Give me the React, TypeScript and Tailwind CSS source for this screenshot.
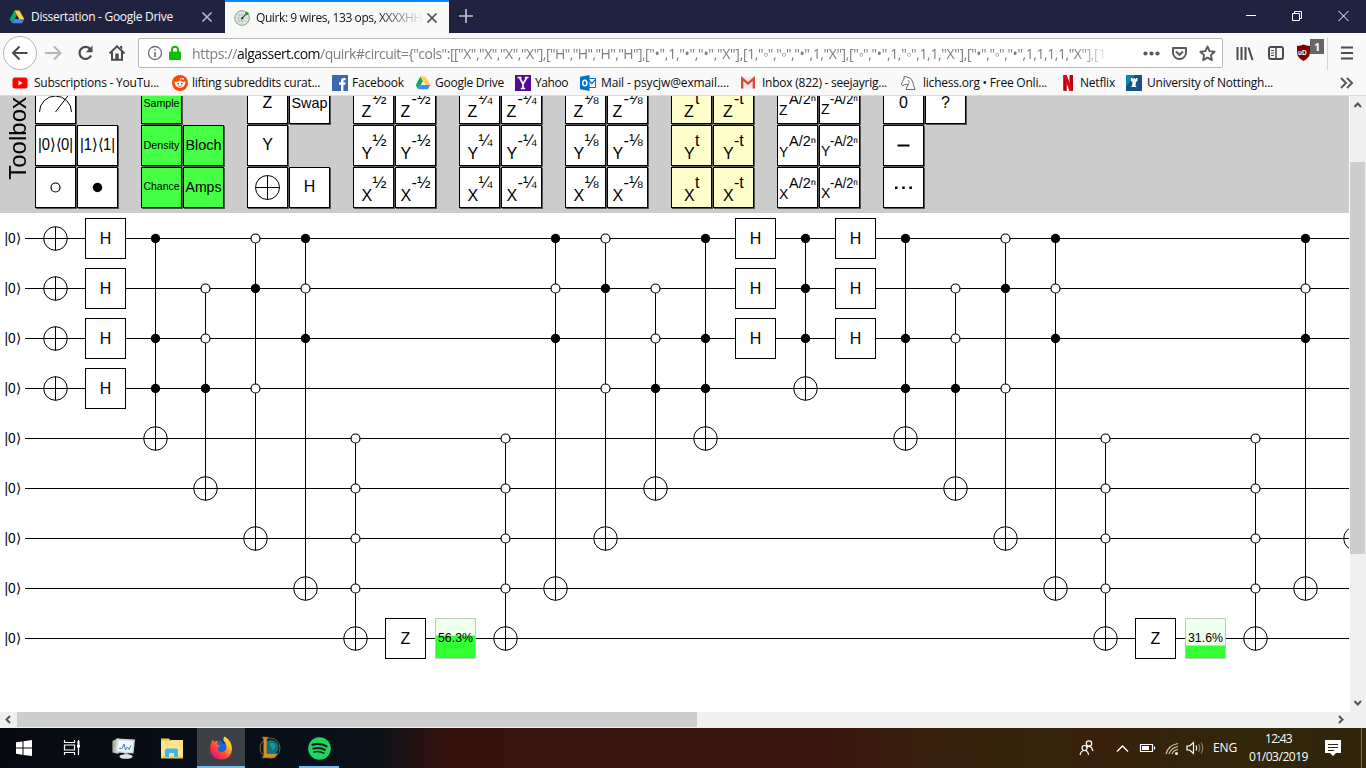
import { useLayoutEffect, useRef, type ReactNode } from "react";

const UI = "font-['Open_Sans','Noto_Sans',sans-serif]";

/** Text whose letter spacing is tuned so that it fills the width of its box. */
function Fit({ children, className }: { children: string; className: string }) {
  const box = useRef<HTMLSpanElement>(null);
  const inner = useRef<HTMLSpanElement>(null);
  useLayoutEffect(() => {
    const b = box.current;
    const i = inner.current;
    if (!b || !i) return;
    i.style.letterSpacing = "0px";
    const diff = b.getBoundingClientRect().width - i.getBoundingClientRect().width;
    i.style.letterSpacing = `${diff / children.length}px`;
  }, [children]);
  return (
    <span ref={box} className={`block shrink-0 whitespace-pre ${className}`}>
      <span ref={inner} className="inline-block">{children}</span>
    </span>
  );
}

/* ---------- small icons ---------- */

function DriveIcon() {
  return (
    <svg width="16" height="16" viewBox="0 0 16 16" className="shrink-0">
      <path d="M5.4 1.5 L0.7 10.2 L3.2 14.2 L8 6z" fill="#0da960" />
      <path d="M5.4 1.5 H10.4 L15.3 10 H10.3z" fill="#ffcf48" />
      <path d="M5.7 10 H15.3 L12.9 14.2 H3.2z" fill="#4587f4" />
    </svg>
  );
}

function Cross({ color }: { color: string }) {
  return (
    <svg width="12" height="12" viewBox="0 0 12 12" className="shrink-0">
      <path d="M1.5 1.5 L10.5 10.5 M10.5 1.5 L1.5 10.5" stroke={color} strokeWidth="1.7" fill="none" />
    </svg>
  );
}

function QuirkIcon() {
  return (
    <svg width="16" height="16" viewBox="0 0 16 16" className="shrink-0">
      <circle cx="8" cy="8" r="7.3" fill="#e3ece3" stroke="#8d978d" />
      <path d="M3 5 H13 M2 8 H14 M3 11 H13 M5 3 V13 M8 2 V14" stroke="#a9bfa9" strokeWidth=".7" />
      <path d="M7.500 9 L12.500 3.500" stroke="#222" strokeWidth="1.1" />
      <path d="M7 9.500 L9.500 8.700 L7.800 7z" fill="#222" />
      <circle cx="12.8" cy="3.5" r="1.8" fill="#2d9b2d" />
    </svg>
  );
}

/* ---------- browser chrome ---------- */

function TabStrip() {
  return (
    <div className="flex h-[33px] shrink-0 bg-[#202340] text-[12px]">
      <div className="flex w-[225px] items-center pt-[1px] pl-[9px] text-[#f9f9fa]">
        <DriveIcon />
        <Fit className="ml-[6px] w-[142px]">Dissertation - Google Drive</Fit>
        <span className="ml-[28px]"><Cross color="#b4b5c0" /></span>
      </div>
      <div className="flex w-[224px] items-center border-t-2 border-[#0a84ff] bg-[#f9f9fa] pl-[9px] text-[#111]">
        <QuirkIcon />
        <span className="ml-[6px] block w-[166px] overflow-hidden [mask-image:linear-gradient(to_right,black_122px,transparent_168px)]">
          <Fit className="w-[166px]">Quirk: 9 wires, 133 ops, XXXXHH</Fit>
        </span>
        <span className="ml-[4px]"><Cross color="#4a4a4f" /></span>
      </div>
      <svg width="34" height="33" className="shrink-0">
        <path d="M10 16 H24 M17 9 V23" stroke="#bfc0cc" strokeWidth="1.7" />
      </svg>
      <div className="flex flex-1 justify-end">
        <svg width="138" height="33" className="shrink-0" fill="none" stroke="#fff">
          <path d="M18 15.500 H28" />
          <path d="M64.500 13.500 h7 v7 h-7 z M66.500 13.500 v-2 h7 v7 h-2" />
          <path d="M110.500 11 l10 10 M120.500 11 l-10 10" />
        </svg>
      </div>
    </div>
  );
}

const URL_PARTS: [string, string][] = [
  ["w-[45px]", "https://"],
  ["w-[83px] text-[#0c0c0d]", "algassert.com"],
  ["w-[134px]", '/quirk#circuit={"cols":['],
  ["w-[92px]", '["X","X","X","X"],'],
  ["w-[99px]", '["H","H","H","H"],'],
  ["w-[98px]", '["•",1,"•","•","X"],'],
  ["w-[106px]", '[1,"◦","◦","•",1,"X"],'],
  ["w-[118px]", '["◦","•",1,"◦",1,1,"X"],'],
  ["w-[127px]", '["•","◦","•",1,1,1,1,"X"],'],
  ["w-[12px]", "[1"],
];

function NavBar() {
  return (
    <div className="flex h-[39px] shrink-0 items-center bg-[#f9f9fa]">
      <svg width="138" height="39" className="shrink-0" fill="none">
        <circle cx="20" cy="20" r="16.500" fill="#fff" stroke="#b6b6b8" />
        <path d="M27.500 20 H13 M19.500 13.500 L13 20 L19.500 26.500" stroke="#4a4a4f" strokeWidth="2" />
        <path d="M45 20 H60 M54 13.500 L60.500 20 L54 26.500" stroke="#b5b5b8" strokeWidth="2" />
        <path d="M90.300 16.200 A6 6 0 1 0 91 22.500" stroke="#4a4a4f" strokeWidth="2.200" />
        <path d="M92.500 12.500 V19.300 H85.800 z" fill="#4a4a4f" />
        <path d="M109.500 20.500 L117 13.300 L124.500 20.500 M112 19 V26.800 H122 V19" stroke="#4a4a4f" strokeWidth="2" />
        <rect x="115.300" y="20.500" width="3.400" height="6" fill="#4a4a4f" />
        <path d="M120 13 h2.200 v3.500 l-2.200 -2z" fill="#4a4a4f" />
      </svg>
      <div className="mt-px flex h-[30px] w-[1085px] shrink-0 items-center rounded-[2px] border border-[#b9b9bb] bg-white">
        <svg width="53" height="28" className="shrink-0" fill="none">
          <circle cx="16" cy="14" r="6.500" stroke="#6f6f73" strokeWidth="1.300" />
          <path d="M16 13 V18 M16 10 V11.600" stroke="#6f6f73" strokeWidth="1.600" />
          <path d="M33 13 V10.800 a3 3 0 0 1 6 0 V13" stroke="#12bc00" strokeWidth="2" />
          <rect x="30" y="12.500" width="12" height="8.500" rx="1" fill="#12bc00" />
        </svg>
        <div className="flex h-[28px] w-[914px] pt-[1px] text-[14px] leading-[27px] text-[#7d7d80] [mask-image:linear-gradient(to_right,black_885px,transparent_918px)]">
          {URL_PARTS.map(([cls, t]) => (
            <Fit key={t} className={cls}>{t}</Fit>
          ))}
        </div>
        <svg width="116" height="28" className="shrink-0" fill="none">
          <g fill="#5a5a5e">
            <circle cx="39.500" cy="14.500" r="2.100" /><circle cx="45.500" cy="14.500" r="2.100" /><circle cx="51.500" cy="14.500" r="2.100" />
          </g>
          <path d="M67 9 h13 v4.500 a6.500 6.500 0 0 1 -13 0z" stroke="#5a5a5e" strokeWidth="2" strokeLinejoin="round" />
          <path d="M70 12.500 L73.500 15.800 L77 12.500" stroke="#5a5a5e" strokeWidth="2" />
          <path d="M101.500 7.500 l2.100 4.600 5 .6 -3.700 3.400 1 5 -4.400 -2.500 -4.400 2.500 1 -5 -3.700 -3.400 5 -.6z" stroke="#5a5a5e" strokeWidth="1.900" strokeLinejoin="round" />
        </svg>
      </div>
      <svg width="143" height="39" className="shrink-0" fill="none" stroke="#4a4a4f">
        <path d="M14.500 14 V27 M18.500 14 V27 M22.500 14 V27 M25.500 14.500 L29.500 27" strokeWidth="2" />
        <rect x="46" y="14" width="14" height="12" rx="2" strokeWidth="2" />
        <path d="M53 14 V26" strokeWidth="1.500" />
        <path d="M48 17.500 H51 M48 20 H51 M48 22.500 H51" strokeWidth="1" />
        <path d="M74 13 Q78 12.500 80.500 11.500 Q83 12.500 87 13 V19 Q87 25 80.500 28 Q74 25 74 19z" fill="#800000" stroke="none" />
        <text x="75" y="22" fontSize="6.500" fontWeight="bold" fill="#fff" stroke="none" fontFamily="Liberation Sans, sans-serif">uD</text>
        <rect x="87" y="6" width="14" height="15" fill="#666669" stroke="none" />
        <text x="91" y="17.500" fontSize="11" fontWeight="bold" fill="#fff" stroke="none" fontFamily="Open Sans, sans-serif">1</text>
        <path d="M104.500 4 V37" stroke="#d7d7db" />
        <path d="M118 14.500 H130 M118 20 H130 M118 25.500 H130" strokeWidth="2" />
      </svg>
    </div>
  );
}

function Icon16({ children }: { children: ReactNode }) {
  return <svg width="16" height="16" viewBox="0 0 16 16" className="shrink-0">{children}</svg>;
}

const BOOKMARKS: { slot: string; text: string; label: string; icon: ReactNode }[] = [
  {
    slot: "w-[160px]", text: "ml-[6px] w-[125px]", label: "Subscriptions - YouTu...",
    icon: <Icon16><rect x=".5" y="2.500" width="15" height="11" rx="2.500" fill="#f00" /><path d="M6.500 5.500 L10.700 8 L6.500 10.500z" fill="#fff" /></Icon16>,
  },
  {
    slot: "w-[160px]", text: "ml-[4px] w-[128px]", label: "lifting subreddits curat...",
    icon: (
      <Icon16>
        <circle cx="8" cy="8" r="8" fill="#ff4500" />
        <ellipse cx="8" cy="9.300" rx="4.800" ry="3.400" fill="#fff" />
        <circle cx="3.600" cy="7.800" r="1.200" fill="#fff" /><circle cx="12.400" cy="7.800" r="1.200" fill="#fff" />
        <path d="M8 6 L8.700 3.300 L11 3.800" stroke="#fff" strokeWidth=".8" fill="none" /><circle cx="11.200" cy="3.900" r=".9" fill="#fff" />
        <circle cx="6.200" cy="8.700" r=".9" fill="#ff4500" /><circle cx="9.800" cy="8.700" r=".9" fill="#ff4500" />
        <path d="M6 10.800 Q8 12 10 10.800" stroke="#ff4500" strokeWidth=".7" fill="none" />
      </Icon16>
    ),
  },
  {
    slot: "w-[83px]", text: "ml-[4px] w-[52px]", label: "Facebook",
    icon: <Icon16><path d="M0 0 H16 V16 H0z" fill="#4267b2" /><path d="M9 16 V9.800 H7 V7.300 H9 V5.600 Q9 3 11.700 3 H13.600 V5.300 H12.300 Q11.400 5.300 11.400 6.200 V7.300 H13.600 L13.200 9.800 H11.400 V16z" fill="#fff" /></Icon16>,
  },
  { slot: "w-[100px]", text: "ml-[4px] w-[69px]", label: "Google Drive", icon: <DriveIcon /> },
  {
    slot: "w-[65px]", text: "ml-[4px] w-[33px]", label: "Yahoo",
    icon: <Icon16><path d="M0 0 H16 V16 H0z" fill="#500a9a" /><path d="M2.500 2.500 H6.500 M9.800 2.500 H13.500 M4.500 2.500 L8 9 L11.800 2.500 M8 9 V13.500 M5.800 13.500 H10.200" stroke="#fff" strokeWidth="1.700" fill="none" /></Icon16>,
  },
  {
    slot: "w-[160px]", text: "ml-[5px] w-[128px]", label: "Mail - psycjw@exmail....",
    icon: (
      <Icon16>
        <path d="M8 3.500 H15.500 V12.500 H8z" fill="#fff" stroke="#0072c6" />
        <path d="M9 5.500 L11.800 8.500 L15 5" stroke="#0072c6" strokeWidth="1.200" fill="none" />
        <path d="M0 1.800 L9.500 0 V16 L0 14.200z" fill="#0072c6" />
        <ellipse cx="4.800" cy="8" rx="2.100" ry="2.800" stroke="#fff" strokeWidth="1.500" fill="none" />
      </Icon16>
    ),
  },
  {
    slot: "w-[160px]", text: "ml-[6px] w-[125px]", label: "Inbox (822) - seejayrig...",
    icon: <Icon16><rect x="1.500" y="2.500" width="13" height="11" fill="#e8e8e8" /><path d="M2.200 13.500 V3.500 L8 8.500 L13.800 3.500 V13.500" stroke="#db4437" strokeWidth="2.300" fill="none" /></Icon16>,
  },
  {
    slot: "w-[160px]", text: "ml-[7px] w-[124px]", label: "lichess.org • Free Onli...",
    icon: (
      <Icon16>
        <path d="M4 1.500 L7 2 Q11.500 2.500 12.800 7 Q13.300 10 15 14.500 H6 Q6.500 12 8.500 9.500 Q6.500 9.500 4.700 9.500 L3 10.800 L1.300 9 Q2.800 6 4 4z" fill="#fff" stroke="#666" strokeWidth="1" />
        <path d="M8 5 Q10 7 8.500 9.500" fill="none" stroke="#777" strokeWidth=".8" />
      </Icon16>
    ),
  },
  {
    slot: "w-[66px]", text: "ml-[4px] w-[35px]", label: "Netflix",
    icon: <Icon16><path d="M3.200 0 H6.700 V16 L3.200 15.700z M9.500 0 H13 V16 L9.500 15.700z" fill="#b1060f" /><path d="M3.200 0 H6.700 L13 16 H9.500z" fill="#e50914" /></Icon16>,
  },
  {
    slot: "w-[190px]", text: "ml-[5px] w-[126px]", label: "University of Nottingh...",
    icon: (
      <Icon16>
        <path d="M0 0 H16 V16 H0z" fill="#14508c" /><path d="M0 0 H9 L0 12z" fill="#1481a6" />
        <path d="M5 3 h1.500 v1 h1 v-1 h1.500 v1 h1 v-1 h1.500 v3 l-1.500 1 -.6 3.500 1.300 1.500 h-5.600 l1 -1.500 .5 -3.500 -1.600 -1z" fill="#fff" />
      </Icon16>
    ),
  },
];

function BookmarkBar() {
  return (
    <div className="flex h-[24px] shrink-0 items-center border-b border-[#dcdcdd] bg-[#f9f9fa] pb-[1px] pl-[12px] text-[12px] text-[#0c0c0d]">
      {BOOKMARKS.map((b) => (
        <div key={b.label} className={`flex shrink-0 items-center ${b.slot}`}>
          {b.icon}
          <Fit className={b.text}>{b.label}</Fit>
        </div>
      ))}
      <svg width="14" height="14" className="ml-[24px] shrink-0" fill="none" stroke="#5a5a5e" strokeWidth="2">
        <path d="M1 2 L6 7 L1 12 M7 2 L12 7 L7 12" />
      </svg>
    </div>
  );
}

/* ---------- toolbox ---------- */

const GATE_FONT = "Liberation Sans, Arial, sans-serif";

function Label({ text, size = 16, width }: { text: string; size?: number; width?: number }) {
  return (
    <text x="20.500" y={20 + size * 0.34} fontSize={size} textAnchor="middle" textLength={width} lengthAdjust="spacingAndGlyphs">
      {text}
    </text>
  );
}

function Power({ base, sup }: { base: string; sup: string }) {
  const neg = sup.startsWith("-");
  const isT = sup.endsWith("t");
  if (sup.includes("A")) {
    return (
      <>
        <text x="2" y={neg ? 31 : 32} fontSize="14">{base}</text>
        <text x={neg ? 11 : 12} y="20.500" fontSize="15" textLength={neg ? 28 : 27} lengthAdjust="spacingAndGlyphs">{sup}</text>
      </>
    );
  }
  const x = (isT ? 13 : 8.5) - (neg ? 3 : 0);
  return (
    <>
      <text x={x} y="34" fontSize="16">{base}</text>
      <text x={x + 11} y="21" fontSize="16" textLength={isT ? undefined : neg ? 19 : 14} lengthAdjust="spacingAndGlyphs">{sup}</text>
    </>
  );
}

const powers = (a: string): ReactNode[] =>
  ["Z", "Y", "X"].flatMap((b) => [
    <Power key={b} base={b} sup={a} />,
    <Power key={`${b}-`} base={b} sup={`-${a}`} />,
  ]);

const line = { fill: "none", stroke: "#000" };

const GROUPS: { color: string; cells: ReactNode[] }[] = [
  {
    color: "bg-white",
    cells: [
      <path {...line} d="M4.500 29 A16 16 0 0 1 36.500 29 M20.500 29 L33.500 12" />, null,
      <Label text="|0⟩⟨0|" width={35} />, <Label text="|1⟩⟨1|" width={35} />,
      <circle {...line} cx="20.500" cy="20.500" r="4.500" fill="#fff" strokeWidth="1.200" />, <circle cx="20.500" cy="20.500" r="4.700" />,
    ],
  },
  {
    color: "bg-[#4f4]",
    cells: [
      <Label text="Sample" size={11.5} width={36} />, null,
      <Label text="Density" size={11.5} width={36} />, <Label text="Bloch" size={14.5} width={36} />,
      <Label text="Chance" size={10} width={36} />, <Label text="Amps" size={14.5} width={36} />,
    ],
  },
  {
    color: "bg-white",
    cells: [
      <Label text="Z" />, <Label text="Swap" size={14.5} width={36} />,
      <Label text="Y" />, null,
      <path {...line} d="M8.500 20.500 H32.500 M20.500 8.500 V32.500 M8.500 20.500 a12 12 0 1 0 24 0 a12 12 0 1 0 -24 0" />, <Label text="H" />,
    ],
  },
  { color: "bg-white", cells: powers("½") },
  { color: "bg-white", cells: powers("¼") },
  { color: "bg-white", cells: powers("⅛") },
  { color: "bg-[#ffffcc]", cells: powers("t") },
  { color: "bg-white", cells: powers("A/2ⁿ") },
  {
    color: "bg-white",
    cells: [
      <Label text="0" />, <Label text="?" />,
      <path d="M14.500 20.500 H26.500" stroke="#000" strokeWidth="2" />, null,
      <path d="M12 19.500 h2.500 v2.500 h-2.500z M19.200 19.500 h2.500 v2.500 h-2.500z M26.400 19.500 h2.500 v2.500 h-2.500z" />, null,
    ],
  },
];

function Toolbox() {
  return (
    <div className="flex h-[117px] shrink-0 items-end overflow-hidden bg-[#ccc] pb-[4px] font-['Liberation_Sans',Arial,sans-serif]">
      <div className="flex w-[35px] shrink-0 justify-center pb-[29px]">
        <span className="rotate-180 text-[24px] leading-[28px] [writing-mode:vertical-rl]">Toolbox</span>
      </div>
      <div className="flex gap-[22px]">
        {GROUPS.map((g, i) => (
          <div key={i} className="grid grid-cols-[42px_42px] grid-rows-[42px_42px_42px]">
            {g.cells.map((c, j) =>
              c ? (
                <div key={j} className={`h-[41px] w-[41px] shadow-[1px_1px_0_#555] outline-1 -outline-offset-1 outline-black ${g.color}`}>
                  <svg width="41" height="41" className="block" fontFamily={GATE_FONT}>{c}</svg>
                </div>
              ) : (
                <div key={j} />
              ),
            )}
          </div>
        ))}
      </div>
    </div>
  );
}

/* ---------- circuit ---------- */

// One character per wire: x = NOT, o = open control, c = control, H/Z = gate, "." = wire only.
const COLUMNS: string[] = [
  "xxxx.....", "HHHH.....", "c.ccx....", ".ooc.x...", "oc.o..x..", "coc....x.", "....oooox", "........Z", "........%56.3",
  "....oooox", "coc....x.", "oc.o..x..", ".ooc.x...", "c.ccx....", "HHH......", "cccx.....", "HHH......",
  "c.ccx....", ".ooc.x...", "oc.o..x..", "coc....x.", "....oooox", "........Z", "........%31.6", "....oooox", "coc....x.", "......x..",
];

function Column({ spec, index }: { spec: string; index: number }) {
  const cx = 55.5 + index * 50;
  const y = (w: number) => 25.5 + w * 50;
  const ops = spec.slice(0, 9).split("");
  const rows = ops.map((o, w) => (o === "." ? -1 : w)).filter((w) => w >= 0);
  const controlled = /[oc]/.test(spec);
  return (
    <g>
      {controlled && <path d={`M${cx} ${y(rows[0])} V${y(rows[rows.length - 1])}`} stroke="#000" />}
      {ops.map((o, w) => {
        const cy = y(w);
        if (o === "x")
          return (
            <g key={w} {...line}>
              <circle cx={cx} cy={cy} r="11.800" />
              <path d={`M${cx} ${cy - 12} V${cy + 12}`} />
            </g>
          );
        if (o === "c") return <circle key={w} cx={cx} cy={cy} r="4.700" />;
        if (o === "o") return <circle key={w} cx={cx} cy={cy} r="4.500" fill="#fff" stroke="#000" strokeWidth="1.200" />;
        if (o === "H" || o === "Z")
          return (
            <g key={w}>
              <rect x={cx - 20} y={cy - 20} width="40" height="40" fill="#fff" stroke="#000" />
              <text x={cx} y={cy + 5.5} fontSize="16" textAnchor="middle">{o}</text>
            </g>
          );
        if (o === "%") {
          const value = spec.slice(9);
          const h = Math.round(Number(value) * 0.4);
          return (
            <g key={w}>
              <rect x={cx - 20} y={cy - 20} width="40" height="40" fill="#efe" />
              <rect x={cx - 20} y={cy + 20 - h} width="40" height={h} fill="#3f3" />
              <rect x={cx - 20} y={cy - 20} width="40" height="40" fill="none" stroke="#c0c8c0" />
              <text x={cx} y={cy + 3.5} fontSize="12.500" textAnchor="middle" textLength="35" lengthAdjust="spacingAndGlyphs">{`${value}%`}</text>
            </g>
          );
        }
        return null;
      })}
    </g>
  );
}

function Circuit() {
  return (
    <svg width="1349" height="499" className="block shrink-0" fontFamily={GATE_FONT}>
      {Array.from({ length: 9 }, (_, w) => (
        <g key={w}>
          <text x="4.500" y={29.5 + w * 50} fontSize="14" textLength="16" lengthAdjust="spacingAndGlyphs">|0⟩</text>
          <path d={`M25 ${25.5 + w * 50} H1349`} stroke="#000" />
        </g>
      ))}
      {COLUMNS.map((c, i) => <Column key={i} spec={c} index={i} />)}
    </svg>
  );
}

/* ---------- taskbar ---------- */

function Taskbar() {
  return (
    <div className="flex h-[40px] shrink-0 items-stretch bg-[linear-gradient(to_right,#070a10_0px,#08101a_320px,#0b1118_376px,#38130e_450px,#38150c_820px,#38200c_920px,#36240c_1060px,#3a200c_1090px,#33250b_1200px,#30260a_1366px)] text-white">
      <svg width="49" height="40" className="shrink-0">
        <path d="M16 14.300 L22.500 13.400 V19.500 H16z M23.500 13.200 L32 12 V19.500 H23.500z M16 20.500 H22.500 V26.700 L16 25.800z M23.500 20.500 H32 V28 L23.500 26.900z" fill="#fff" />
      </svg>
      <svg width="50" height="40" className="shrink-0" fill="none" stroke="#fff" strokeWidth="1.200">
        <path d="M15.500 12 V14.500 H25.500 V12 M15.500 27 V24.500 H25.500 V27 M15.500 17 H25.500 V22 H15.500z M29.500 12 V27" />
        <rect x="28.500" y="13" width="2" height="4" fill="#fff" stroke="none" />
        <rect x="28" y="17" width="3" height="2.500" fill="#fff" stroke="none" />
      </svg>
      <svg width="49" height="40" className="shrink-0">
        <path d="M13.500 13 l6 -3 v16 l-6 -1.500z" fill="#b4b9b6" />
        <path d="M17.500 10.500 L36 11.500 L34.500 25.500 L16.500 24.500z" fill="#d3d9da" />
        <path d="M19.500 12.500 L34 13.500 L33 24 L18.500 23z" fill="#f4f8fa" />
        <path d="M20 20.500 l3 0 2 -4.500 1.500 6 2 -3 1.500 2.500 2 -4" stroke="#3b86c4" fill="none" />
        <path d="M25 25 h4 l1 2 h-5z" fill="#999" /><ellipse cx="27" cy="28.500" rx="6.500" ry="2.300" fill="#dfe3e3" />
        <path d="M14.500 16 v3" stroke="#7bbd3a" strokeWidth="1.500" />
      </svg>
      <svg width="49" height="40" className="shrink-0">
        <path d="M13 7.500 h8 l2 2.500 h12 v17.500 h-22z" fill="#f6c64f" transform="translate(0 3)" />
        <path d="M13 13 h9 l1 -1 h12 v16.500 h-22z" fill="#fce48e" />
        <path d="M17 29 v-6.500 q0 -2 2 -2 h9 q2 0 2 2 v6.500 h-4 v-4 h-5 v4z" fill="#3fb4ea" />
      </svg>
      <div className="flex w-[48px] shrink-0 items-center justify-center border-b-2 border-[#76b9ed] bg-[#3d4145]">
        <svg width="24" height="24" viewBox="0 0 24 24" className="mt-[2px]">
          <defs>
            <linearGradient id="fox" x1=".9" y1="0" x2=".15" y2=".85">
              <stop offset="0" stopColor="#fff44f" /><stop offset=".35" stopColor="#ffb32b" /><stop offset=".65" stopColor="#ff4f2e" /><stop offset="1" stopColor="#e8146f" />
            </linearGradient>
          </defs>
          <circle cx="12.500" cy="12" r="7.500" fill="#1b63d8" />
          <path d="M15.500 0.500 Q23 5 23 13 Q22.500 23 12 23.500 Q1.500 23 1 13 Q1 8 3.500 3.500 L5 6 Q6.500 4.800 9 5 Q7 7 8.500 9 L11.500 9.500 L8.500 12 Q9 16.500 13.500 16 Q17.500 15 17.500 11 Q17.500 8 14.500 5.500 Q14 2.500 15.500 .5z" fill="url(#fox)" />
          <path d="M12 3.500 Q15.500 4 16.500 8 L13.500 7z" fill="#16348c" />
        </svg>
      </div>
      <svg width="50" height="40" className="shrink-0">
        <circle cx="25" cy="20" r="10" fill="#071820" stroke="#7c6430" />
        <circle cx="26" cy="19.500" r="7.500" fill="#0c7181" /><path d="M24 15 q5 -2 7 3 l-3 5z" fill="#1795a2" />
        <path d="M17 9 h6.500 l-1.500 2 v14.500 h11 l-3.500 4.500 h-12.500 l1.500 -2.500 v-16z" fill="#c89336" stroke="#714c17" strokeWidth=".6" />
      </svg>
      <div className="flex w-[48px] shrink-0 justify-center">
        <div className="flex w-[40px] items-center justify-center border-b-2 border-[#76b9ed]">
          <svg width="23" height="23" viewBox="0 0 23 23" className="mt-[2px]">
            <circle cx="11.500" cy="11.500" r="11.300" fill="#1ed760" />
            <path d="M4.500 7.800 Q12 5.500 18.500 9.300" stroke="#121a18" strokeWidth="2.200" fill="none" strokeLinecap="round" />
            <path d="M5.300 11.600 Q11.700 9.800 17 12.800" stroke="#121a18" strokeWidth="1.900" fill="none" strokeLinecap="round" />
            <path d="M5.800 15 Q11.500 13.600 15.800 16.100" stroke="#121a18" strokeWidth="1.500" fill="none" strokeLinecap="round" />
          </svg>
        </div>
      </div>
      <div className="flex-1" />
      <svg width="137" height="40" className="shrink-0" fill="none" stroke="#fff" strokeWidth="1.200">
        <circle cx="14" cy="15.500" r="2.700" /><path d="M11.500 19.500 Q14 17 16.500 19.500 L18 23" />
        <circle cx="9.500" cy="20" r="2.500" /><path d="M5 27 Q6 22.500 9.500 22.500 Q13 22.500 13.500 27" />
        <path d="M42 23.500 L47.500 18 L53 23.500" strokeWidth="1.400" />
        <path d="M65.500 16.500 h12 v7 h-12z M79.500 18.500 v3" />
        <rect x="67" y="18" width="7" height="4" fill="#fff" stroke="none" />
        <g stroke="#d0c8b8"><path d="M91 26 Q93 17.500 103 15.500 M94 26 Q96 20 103 18.500 M97 26 Q98.500 22 103 21.500" /></g>
        <circle cx="101.500" cy="25.500" r="1.500" fill="#fff" stroke="none" />
        <path d="M112 18 h2.500 l4 -3.500 v11 l-4 -3.500 h-2.500z" />
        <path d="M121 17.500 q1.500 2.500 0 5" /><path d="M123.500 16 q2.500 4 0 8 M126 14.500 q3.500 5.500 0 11" stroke="#8b8066" />
      </svg>
      <div className="ml-px flex w-[36px] shrink-0 items-center text-[12px]">
        <Fit className="w-[24px]">ENG</Fit>
      </div>
      <div className="flex w-[59px] shrink-0 flex-col items-center justify-center pb-[1px] text-[12px] leading-[18px]">
        <Fit className="w-[27px]">12:43</Fit>
        <Fit className="w-[59px]">01/03/2019</Fit>
      </div>
      <svg width="58" height="40" className="shrink-0">
        <path d="M17 12 h16 v13 h-5 l-3 3 -3 -3 h-5z" fill="#fff" />
        <path d="M20 16.500 h10 M20 19.500 h10 M20 22.500 h6" stroke="#33250b" />
        <path d="M53.500 0 V40" stroke="#77705c" />
      </svg>
    </div>
  );
}

function Arrow({ d }: { d: string }) {
  return (
    <svg width="16" height="16" viewBox="0 0 16 16" className="shrink-0">
      <path d={d} fill="none" stroke="#555" strokeWidth="2" />
    </svg>
  );
}

export default function App() {
  return (
    <div className={`flex h-[768px] w-[1366px] flex-col overflow-hidden bg-white ${UI}`}>
      <TabStrip />
      <NavBar />
      <BookmarkBar />
      <div className="flex h-[632px] shrink-0">
        <div className="flex w-[1350px] shrink-0 flex-col">
          <div className="flex w-[1349px] flex-col">
            <Toolbox />
            <Circuit />
          </div>
          <div className="flex h-[16px] w-full justify-between bg-[#f0f0f0]">
            <div className="flex">
              <Arrow d="M10 4 L6.500 7.500 L10 11" />
              <div className="ml-px h-[15px] w-[680px] bg-[#cdcdcd]" />
            </div>
            <Arrow d="M5 4 L8.500 7.500 L5 11" />
          </div>
        </div>
        <div className="flex w-[16px] flex-col bg-[#f0f0f0]">
          <Arrow d="M4.500 11 L7.800 7.500 L11 11" />
          <div className="mt-[50px] h-[392px] w-[15px] bg-[#cdcdcd]" />
          <div className="flex-1" />
          <div className="mb-[16px] flex h-[16px]"><Arrow d="M4.500 5 L7.800 8.500 L11 5" /></div>
        </div>
      </div>
      <Taskbar />
    </div>
  );
}
